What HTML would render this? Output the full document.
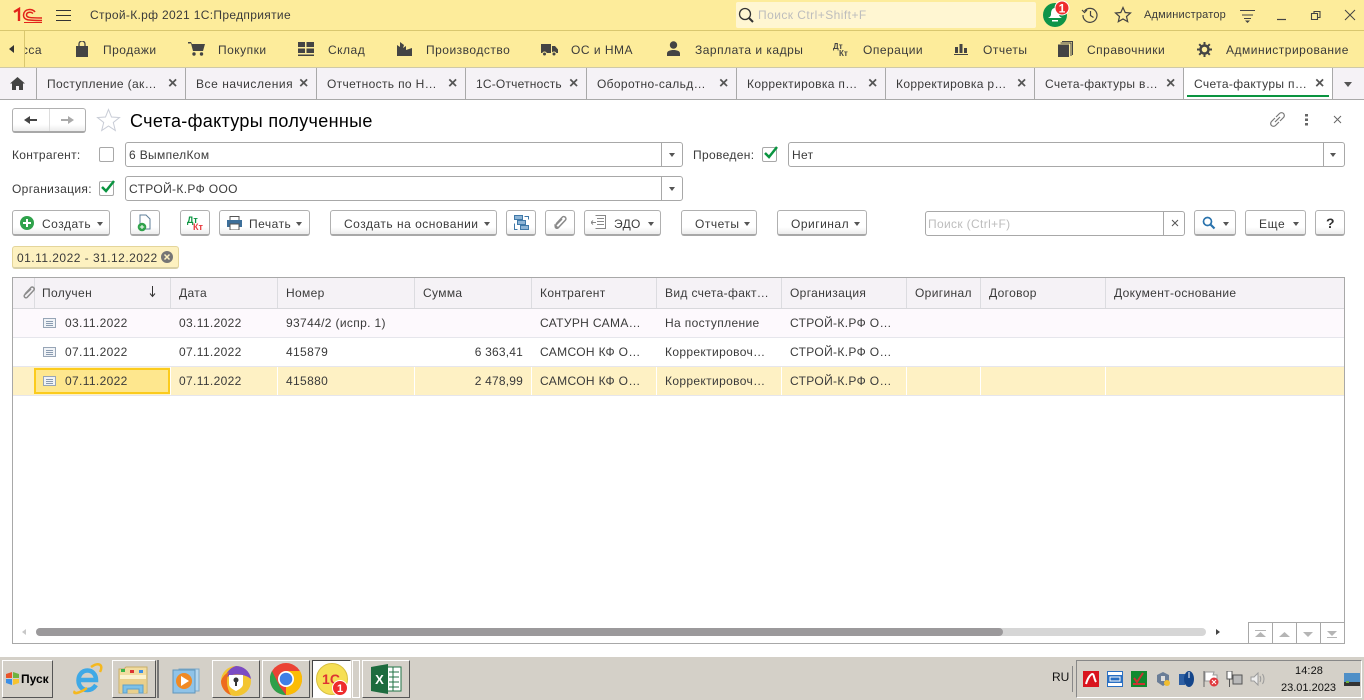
<!DOCTYPE html>
<html><head><meta charset="utf-8"><style>
html,body{margin:0;padding:0}
body{width:1364px;height:700px;overflow:hidden;background:#fff;position:relative;font-family:"Liberation Sans",sans-serif;font-size:12px;color:#3a3a3a}
.a,.t,.b,svg.i{position:absolute}
.t{white-space:nowrap;line-height:14px;letter-spacing:.35px}
.m{letter-spacing:.5px}
.a{box-sizing:border-box}
.b{box-sizing:border-box;height:26px;top:210px;border:1px solid #b0b0b0;border-bottom:2px solid #a8a8a8;border-radius:3px;background:linear-gradient(#fff 70%,#ececec)}
.in{position:absolute;box-sizing:border-box;background:#fff;border:1px solid #a8a8a8;border-radius:3px;height:25px}
.tri{position:absolute;width:0;height:0;border-left:3.5px solid transparent;border-right:3.5px solid transparent;border-top:4px solid #555}
.cb{position:absolute;box-sizing:border-box;width:15px;height:15px;border:1px solid #a8a8a8;border-radius:2px;background:#fff}
.x{position:absolute;font-size:16px;font-weight:bold;color:#555;line-height:14px}
.tb{position:absolute;box-sizing:border-box;top:660px;height:38px;border:1px solid;border-color:#fff #555 #555 #fff;background:#d4d0c8}
</style></head><body>

<!-- top bar -->
<div class="a" style="left:0;top:0;width:1364px;height:31px;background:#fdec9b;border-bottom:1px solid #d9c76f"></div>
<svg class="i" style="left:13px;top:7px" width="30" height="16" viewBox="0 0 30 16" fill="none" stroke="#e2231a"><path d="M1 5 6 2V14" stroke-width="2.400"/><path d="M22 5C20 1.500 11 1 10.500 8 10.500 13 14 13.500 29 13.500" stroke-width="1.500"/><path d="M20 6.500C18 4.500 13.500 5 13.500 8 13.500 10.500 16 11 29 11" stroke-width="1.500"/><path d="M11 15.500H29" stroke-width="1"/></svg>
<svg class="i" style="left:56px;top:10px" width="15" height="12" stroke="#333" stroke-width="1"><path d="M0 .5H15M0 5.500H15M0 10.500H15"/></svg>
<div class="t" style="left:90px;top:8px;letter-spacing:.33px">Строй-К.рф 2021 1С:Предприятие</div>
<div class="a" style="left:736px;top:2px;width:300px;height:26px;background:#fff6d2;border-radius:2px"></div>
<svg class="i" style="left:738px;top:7px" width="17" height="16" fill="none" stroke="#333"><circle cx="7" cy="7" r="5.500" stroke-width="1.300"/><path d="M11 11 15 15" stroke-width="2"/></svg>
<div class="t" style="left:758px;top:8px;color:#bdbdbd;letter-spacing:.45px">Поиск Ctrl+Shift+F</div>
<svg class="i" style="left:1042px;top:0" width="30" height="28"><circle cx="13" cy="15" r="12" fill="#0e9448"/><path d="M13 8c-3 0-4 3-4 6 0 2-1 3-3 4h14c-2-1-3-2-3-4 0-3-1-6-4-6z" fill="#fff"/><path d="M10 20h6v1.500h-6z" fill="#fff"/><circle cx="20" cy="8" r="7" fill="#ee2c2c" stroke="#fff"/><text x="20" y="12.500" text-anchor="middle" font-size="12" font-weight="bold" fill="#fff" font-family="Liberation Sans">1</text></svg>
<svg class="i" style="left:1081px;top:6px" width="18" height="18" fill="none" stroke="#444" stroke-width="1.200"><path d="M3.500 5A7 7 0 1 1 2 9"/><path d="M1 4 3.500 6.500 6 4" /><path d="M9.500 5v4.500l3 2"/></svg>
<svg class="i" style="left:1114px;top:6px" width="18" height="17" fill="none" stroke="#444" stroke-width="1.200"><path d="M9 1.500 11.200 6.500 16.500 7 12.500 10.500 13.700 15.700 9 13 4.300 15.700 5.500 10.500 1.500 7 6.800 6.500z"/></svg>
<div class="t" style="left:1144px;top:8px;font-size:11px;letter-spacing:.2px">Администратор</div>
<svg class="i" style="left:1240px;top:9px" width="15" height="14" fill="#444"><path d="M0 1h15v1H0zM2 5.500h11v1H2zM4 9h7v1H4zM5 11.500h5L7.500 14z"/></svg>
<svg class="i" style="left:1276px;top:9px" width="80" height="13" fill="none" stroke="#444"><path d="M1 10.500H10" stroke-width="1.200"/><path d="M35.500 4.500h6v6h-6zM38 4.500v-2h6v6h-2.500" stroke-width="1.100"/><path d="M69 1 79 11M79 1 69 11" stroke-width="1"/></svg>

<!-- menu -->
<div class="a" style="left:0;top:31px;width:1364px;height:37px;background:#fdec9b;border-bottom:1px solid #cfc9a8"></div>
<div class="a" style="left:24px;top:31px;width:1px;height:36px;background:#d9c76f"></div>
<div class="a" style="left:9px;top:45px;border-right:5px solid #333;border-top:4px solid transparent;border-bottom:4px solid transparent"></div>
<div class="t m" style="left:25px;top:43px;width:17px;overflow:hidden;direction:rtl">сса</div>
<div class="t m" style="left:103px;top:43px">Продажи</div>
<div class="t m" style="left:218px;top:43px">Покупки</div>
<div class="t m" style="left:328px;top:43px">Склад</div>
<div class="t m" style="left:426px;top:43px">Производство</div>
<div class="t m" style="left:571px;top:43px">ОС и НМА</div>
<div class="t m" style="left:695px;top:43px">Зарплата и кадры</div>
<div class="t m" style="left:863px;top:43px">Операции</div>
<div class="t m" style="left:983px;top:43px">Отчеты</div>
<div class="t m" style="left:1087px;top:43px">Справочники</div>
<div class="t m" style="left:1226px;top:43px">Администрирование</div>
<svg class="i" style="left:75px;top:41px" width="14" height="16" fill="#444"><path d="M1 5h12v11H1z"/><path d="M4 6V3a3 3 0 0 1 6 0v3" fill="none" stroke="#444" stroke-width="1.300"/></svg>
<svg class="i" style="left:188px;top:41px" width="17" height="15" fill="#444"><path d="M0 1h3l1 2h13l-2 7H5L3 2.500H0z"/><circle cx="6" cy="13" r="1.700"/><circle cx="13.500" cy="13" r="1.700"/></svg>
<svg class="i" style="left:298px;top:42px" width="16" height="14" fill="#444"><path d="M0 0h7v5H0zM8.500 0H16v5H8.500zM0 6.500h7V11H0zM8.500 6.500H16V11H8.500zM0 12.500h16V14H0z"/></svg>
<svg class="i" style="left:397px;top:42px" width="15" height="14" fill="#444"><path d="M0 14V3l3 2V0l4 3-1 3 3-2v4l6-2v8z"/></svg>
<svg class="i" style="left:541px;top:43px" width="17" height="13" fill="#444"><path d="M0 1h10v9H0zM11 3h3l3 3.500V10h-6z"/><circle cx="3.500" cy="11" r="2" stroke="#fdec9b"/><circle cx="13" cy="11" r="2" stroke="#fdec9b"/></svg>
<svg class="i" style="left:667px;top:41px" width="13" height="15" fill="#444"><circle cx="6.500" cy="4" r="3.700"/><path d="M0 15v-2.500C0 10 3 9 6.500 9s6.500 1 6.500 3.500V15z"/></svg>
<div class="t" style="left:833px;top:40px;font-size:8px;font-weight:bold;color:#444;letter-spacing:0">Дт</div>
<div class="t" style="left:839px;top:47px;font-size:8px;font-weight:bold;color:#444;letter-spacing:0">Кт</div>
<svg class="i" style="left:954px;top:43px" width="14" height="12" fill="#444"><path d="M1 4h3v6H1zM5.500 1h3v9h-3zM10 5h3v5h-3zM0 11h14v1H0z"/></svg>
<svg class="i" style="left:1058px;top:41px" width="15" height="16"><path d="M4 .5h10.500V14M2.500 2h10.500v13" fill="none" stroke="#444"/><path d="M0 3.500h11V16H0z" fill="#444"/></svg>
<svg class="i" style="left:1197px;top:42px" width="15" height="15" fill="none" stroke="#444"><circle cx="7.500" cy="7.500" r="4" stroke-width="2.500"/><path d="M7.500 0V3M7.500 12V15M0 7.500H3M12 7.500H15M2.200 2.200 4.300 4.300M10.700 10.700 12.800 12.800M2.200 12.800 4.300 10.700M10.700 4.300 12.800 2.200" stroke-width="2"/></svg>

<!-- tabs -->
<div class="a" style="left:0;top:68px;width:1364px;height:32px;background:#f5f2f6;border-bottom:1px solid #a9a9a9"></div>
<svg class="i" style="left:10px;top:77px" width="15" height="13" fill="#444"><path d="M7.500 0 15 6.500h-2V13H9V9H6v4H2V6.500H0z"/></svg>
<div class="a" style="left:1183px;top:68px;width:150px;height:32px;background:#fff;border-bottom:1px solid #a9a9a9"></div>
<div class="a" style="left:1187px;top:95px;width:142px;height:2px;background:#0a9440"></div>
<div class="a" style="left:36px;top:68px;width:1px;height:31px;background:#a9a9a9"></div>
<div class="a" style="left:185px;top:68px;width:1px;height:31px;background:#a9a9a9"></div>
<div class="a" style="left:316px;top:68px;width:1px;height:31px;background:#a9a9a9"></div>
<div class="a" style="left:465px;top:68px;width:1px;height:31px;background:#a9a9a9"></div>
<div class="a" style="left:586px;top:68px;width:1px;height:31px;background:#a9a9a9"></div>
<div class="a" style="left:736px;top:68px;width:1px;height:31px;background:#a9a9a9"></div>
<div class="a" style="left:885px;top:68px;width:1px;height:31px;background:#a9a9a9"></div>
<div class="a" style="left:1034px;top:68px;width:1px;height:31px;background:#a9a9a9"></div>
<div class="a" style="left:1183px;top:68px;width:1px;height:31px;background:#a9a9a9"></div>
<div class="a" style="left:1332px;top:68px;width:1px;height:31px;background:#a9a9a9"></div>
<div class="t" style="left:47px;top:77px">Поступление (ак…</div><div class="x" style="left:168px;top:77px">×</div>
<div class="t" style="left:196px;top:77px;letter-spacing:.55px">Все начисления</div><div class="x" style="left:299px;top:77px">×</div>
<div class="t" style="left:327px;top:77px">Отчетность по Н…</div><div class="x" style="left:448px;top:77px">×</div>
<div class="t" style="left:476px;top:77px;letter-spacing:.2px">1С-Отчетность</div><div class="x" style="left:569px;top:77px">×</div>
<div class="t" style="left:597px;top:77px">Оборотно-сальд…</div><div class="x" style="left:719px;top:77px">×</div>
<div class="t" style="left:747px;top:77px">Корректировка п…</div><div class="x" style="left:868px;top:77px">×</div>
<div class="t" style="left:896px;top:77px">Корректировка р…</div><div class="x" style="left:1017px;top:77px">×</div>
<div class="t" style="left:1045px;top:77px">Счета-фактуры в…</div><div class="x" style="left:1166px;top:77px">×</div>
<div class="t" style="left:1194px;top:77px">Счета-фактуры п…</div><div class="x" style="left:1315px;top:77px">×</div>
<div class="tri" style="left:1344px;top:82px;border-left-width:4px;border-right-width:4px;border-top-width:5px;border-top-color:#555"></div>

<!-- title -->
<div class="b" style="left:12px;top:108px;width:74px;height:25px"></div>
<div class="a" style="left:49px;top:109px;width:1px;height:22px;background:#ddd"></div>
<svg class="i" style="left:24px;top:115px" width="50" height="10"><path d="M0 5 6 1v3h7v2H6v3z" fill="#444"/><path d="M50 5 44 1v3h-7v2h7v3z" fill="#aaa"/></svg>
<svg class="i" style="left:96px;top:108px" width="25" height="24" fill="none" stroke="#c8ccd6"><path d="M12.500 1.500 15.500 9 23.500 9.500 17.300 14.500 19.300 22.500 12.500 18 5.700 22.500 7.700 14.500 1.500 9.500 9.500 9z"/></svg>
<div class="t" style="left:130px;top:111px;font-size:18px;line-height:21px;color:#000;letter-spacing:.33px">Счета-фактуры полученные</div>
<svg class="i" style="left:1269px;top:111px" width="17" height="17" fill="none" stroke="#777" stroke-width="1.200"><path d="M7 6 10.500 2.500a2.500 2.500 0 0 1 4 4L11 10M10 11 6.500 14.500a2.500 2.500 0 0 1-4-4L6 7"/><path d="M6 11 11 6"/></svg>
<svg class="i" style="left:1305px;top:114px" width="4" height="12" fill="#666"><path d="M0 0h3v2.500H0zM0 4.500h3V7H0zM0 9h3v2.500H0z"/></svg>
<svg class="i" style="left:1333px;top:115px" width="9" height="9" stroke="#666"><path d="M1 1 8 8M8 1 1 8"/></svg>

<!-- filters -->
<div class="t" style="left:12px;top:148px;letter-spacing:.28px">Контрагент:</div>
<div class="cb" style="left:99px;top:147px"></div>
<div class="in" style="left:125px;top:142px;width:558px"></div>
<div class="a" style="left:661px;top:142px;width:1px;height:25px;background:#a8a8a8"></div>
<div class="tri" style="left:669px;top:153px"></div>
<div class="t" style="left:129px;top:148px">6 ВымпелКом</div>
<div class="t" style="left:693px;top:148px">Проведен:</div>
<div class="cb" style="left:762px;top:147px"></div>
<svg class="i" style="left:763px;top:145px" width="16" height="15" fill="none" stroke="#0a9440" stroke-width="2.500"><path d="M2 8 6 12 14 2"/></svg>
<div class="in" style="left:788px;top:142px;width:557px"></div>
<div class="a" style="left:1323px;top:142px;width:1px;height:25px;background:#a8a8a8"></div>
<div class="tri" style="left:1330px;top:153px"></div>
<div class="t" style="left:792px;top:148px">Нет</div>
<div class="t" style="left:12px;top:182px">Организация:</div>
<div class="cb" style="left:99px;top:181px"></div>
<svg class="i" style="left:100px;top:179px" width="16" height="15" fill="none" stroke="#0a9440" stroke-width="2.500"><path d="M2 8 6 12 14 2"/></svg>
<div class="in" style="left:125px;top:176px;width:558px"></div>
<div class="a" style="left:661px;top:176px;width:1px;height:25px;background:#a8a8a8"></div>
<div class="tri" style="left:669px;top:187px"></div>
<div class="t" style="left:129px;top:182px">СТРОЙ-К.РФ ООО</div>

<!-- toolbar -->
<div class="b" style="left:12px;width:98px"></div>
<svg class="i" style="left:20px;top:216px" width="14" height="14"><circle cx="7" cy="7" r="7" fill="#2fa24b"/><path d="M3 6h3V3h2v3h3v2H8v3H6V8H3z" fill="#fff"/></svg>
<div class="t" style="left:42px;top:217px;letter-spacing:.5px">Создать</div><div class="tri" style="left:97px;top:222px"></div>
<div class="b" style="left:130px;width:30px"></div>
<svg class="i" style="left:137px;top:214px" width="15" height="18"><path d="M3 1h6l4 4v10H3z" fill="#fff" stroke="#5f7f99"/><circle cx="5" cy="13" r="4.300" fill="#2fa24b"/><path d="M2.800 12.500h1.700V11h1v1.500h1.700v1H5.500V15h-1v-1.500H2.800z" fill="#fff"/></svg>
<div class="b" style="left:180px;width:30px"></div>
<div class="t" style="left:187px;top:213px;font-size:9px;font-weight:bold;color:#0a9440;letter-spacing:0">Дт</div>
<div class="t" style="left:193px;top:220px;font-size:9px;font-weight:bold;color:#e8383d;letter-spacing:0">Кт</div>
<div class="b" style="left:219px;width:91px"></div>
<svg class="i" style="left:227px;top:216px" width="15" height="14"><path d="M3 .5h9v4H3z" fill="#fff" stroke="#555"/><path d="M0 4h15v7H0z" fill="#3d6f9a"/><path d="M3 8h9v6H3z" fill="#fff" stroke="#555"/></svg>
<div class="t" style="left:249px;top:217px;letter-spacing:.5px">Печать</div><div class="tri" style="left:296px;top:222px"></div>
<div class="b" style="left:330px;width:167px"></div>
<div class="t" style="left:344px;top:217px;letter-spacing:.5px">Создать на основании</div><div class="tri" style="left:484px;top:222px"></div>
<div class="b" style="left:506px;width:30px"></div>
<svg class="i" style="left:514px;top:215px" width="15" height="15" fill="#8db4d6" stroke="#3f78a8"><path d="M.5.500h8v4h-8zM3.500 5.500h8v4h-8zM6.500 10.500h8v4h-8z" /><path d="M10.500 1.500h4v3M.5 8.500v6h3" fill="none"/></svg>
<div class="b" style="left:545px;width:30px"></div>
<svg class="i" style="left:553px;top:215px" width="14" height="15" fill="none" stroke="#8a8a8a" stroke-width="1.500"><path d="M3 9 9 2.500a2 2 0 0 1 3.500 2.500L5.500 12.500a1.500 1.500 0 0 1-3-2L9 4M1.500 9.500l3 3"/></svg>
<div class="b" style="left:584px;width:77px"></div>
<svg class="i" style="left:591px;top:215px" width="16" height="15" fill="none" stroke="#888"><path d="M4.500.5h10v13h-10M6 3.500h7M6 6.500h7M6 9.500h7M0 7.500h5M2 5.500 0 7.500l2 2"/></svg>
<div class="t" style="left:614px;top:217px">ЭДО</div><div class="tri" style="left:648px;top:222px"></div>
<div class="b" style="left:681px;width:76px"></div>
<div class="t" style="left:695px;top:217px;letter-spacing:.5px">Отчеты</div><div class="tri" style="left:744px;top:222px"></div>
<div class="b" style="left:777px;width:90px"></div>
<div class="t" style="left:791px;top:217px;letter-spacing:.5px">Оригинал</div><div class="tri" style="left:854px;top:222px"></div>
<div class="in" style="left:925px;top:211px;width:260px"></div>
<div class="a" style="left:1163px;top:211px;width:1px;height:25px;background:#a8a8a8"></div>
<div class="t" style="left:928px;top:217px;color:#bdbdbd">Поиск (Ctrl+F)</div>
<svg class="i" style="left:1171px;top:219px" width="8" height="8" stroke="#555"><path d="M1 1 7 7M7 1 1 7"/></svg>
<div class="b" style="left:1194px;width:42px"></div>
<svg class="i" style="left:1202px;top:216px" width="14" height="14" fill="none" stroke="#2a73ad" stroke-width="1.700"><circle cx="5.500" cy="5.500" r="4"/><path d="M8.500 8.500 12.500 12.500" stroke-width="2.200"/></svg>
<div class="tri" style="left:1223px;top:222px"></div>
<div class="b" style="left:1245px;width:61px"></div>
<div class="t" style="left:1259px;top:217px;letter-spacing:.6px">Еще</div><div class="tri" style="left:1293px;top:222px"></div>
<div class="b" style="left:1315px;width:30px"></div>
<div class="t" style="left:1326px;top:216px;font-size:14px;font-weight:bold;color:#333;letter-spacing:0">?</div>

<!-- date chip -->
<div class="a" style="left:12px;top:246px;width:167px;height:23px;background:#fdf1c0;border:1px solid #e4d59a;border-bottom:2px solid #d8d0a8;border-radius:3px"></div>
<div class="t" style="left:17px;top:251px;letter-spacing:.47px">01.11.2022 - 31.12.2022</div>
<svg class="i" style="left:161px;top:251px" width="12" height="12"><circle cx="6" cy="6" r="6" fill="#757575"/><path d="M3.500 3.500 8.500 8.500M8.500 3.500 3.500 8.500" stroke="#fdf1c0" stroke-width="1.500"/></svg>

<!-- table -->
<div class="a" style="left:12px;top:277px;width:1333px;height:367px;border:1px solid #a8a8a8"></div>
<div class="a" style="left:13px;top:278px;width:1331px;height:30px;background:#f5f2f6"></div>
<div class="a" style="left:13px;top:308px;width:1331px;height:1px;background:#d8d8dc"></div>
<div class="a" style="left:13px;top:309px;width:1331px;height:28px;background:#fdf9fd"></div>
<div class="a" style="left:13px;top:337px;width:1331px;height:1px;background:#e6e6ec"></div>
<div class="a" style="left:13px;top:366px;width:1331px;height:1px;background:#e6e6ec"></div>
<div class="a" style="left:13px;top:367px;width:1331px;height:28px;background:#fef1c4"></div>
<div class="a" style="left:13px;top:395px;width:1331px;height:1px;background:#e6e6ec"></div>
<div class="a" style="left:34px;top:278px;width:1px;height:30px;background:#dcdce0"></div>
<div class="a" style="left:170px;top:278px;width:1px;height:30px;background:#dcdce0"></div>
<div class="a" style="left:277px;top:278px;width:1px;height:30px;background:#dcdce0"></div>
<div class="a" style="left:414px;top:278px;width:1px;height:30px;background:#dcdce0"></div>
<div class="a" style="left:531px;top:278px;width:1px;height:30px;background:#dcdce0"></div>
<div class="a" style="left:656px;top:278px;width:1px;height:30px;background:#dcdce0"></div>
<div class="a" style="left:781px;top:278px;width:1px;height:30px;background:#dcdce0"></div>
<div class="a" style="left:906px;top:278px;width:1px;height:30px;background:#dcdce0"></div>
<div class="a" style="left:980px;top:278px;width:1px;height:30px;background:#dcdce0"></div>
<div class="a" style="left:1105px;top:278px;width:1px;height:30px;background:#dcdce0"></div>
<div class="a" style="left:170px;top:367px;width:1px;height:28px;background:#fff"></div>
<div class="a" style="left:277px;top:367px;width:1px;height:28px;background:#fff"></div>
<div class="a" style="left:414px;top:367px;width:1px;height:28px;background:#fff"></div>
<div class="a" style="left:531px;top:367px;width:1px;height:28px;background:#fff"></div>
<div class="a" style="left:656px;top:367px;width:1px;height:28px;background:#fff"></div>
<div class="a" style="left:781px;top:367px;width:1px;height:28px;background:#fff"></div>
<div class="a" style="left:906px;top:367px;width:1px;height:28px;background:#fff"></div>
<div class="a" style="left:980px;top:367px;width:1px;height:28px;background:#fff"></div>
<div class="a" style="left:1105px;top:367px;width:1px;height:28px;background:#fff"></div>
<div class="a" style="left:34px;top:368px;width:136px;height:26px;background:#fee78e;border:2px solid #fbcb1d"></div>
<svg class="i" style="left:22px;top:285px" width="14" height="15" fill="none" stroke="#8c8c8c" stroke-width="1.500"><path d="M3 9 9 2.500a2 2 0 0 1 3 2.500L5.500 12a1.500 1.500 0 0 1-3-2L9 4"/></svg>
<div class="t" style="left:42px;top:286px">Получен</div>
<svg class="i" style="left:149px;top:286px" width="7" height="12" fill="none" stroke="#333"><path d="M3.500 0V10M1 7.500 3.500 10.500 6 7.500"/></svg>
<div class="t" style="left:179px;top:286px">Дата</div>
<div class="t" style="left:286px;top:286px">Номер</div>
<div class="t" style="left:423px;top:286px">Сумма</div>
<div class="t" style="left:540px;top:286px">Контрагент</div>
<div class="t" style="left:665px;top:286px">Вид счета-факт…</div>
<div class="t" style="left:790px;top:286px">Организация</div>
<div class="t" style="left:915px;top:286px">Оригинал</div>
<div class="t" style="left:989px;top:286px">Договор</div>
<div class="t" style="left:1114px;top:286px">Документ-основание</div>

<svg class="i" style="left:43px;top:318px" width="14" height="11" fill="none" stroke="#97a5b6"><path d="M.5.500h12v9H.5z" fill="#f0f3f7"/><path d="M3 3.500H10M3 5.500H10M3 7.500H10" stroke="#8a9bb0"/></svg>
<svg class="i" style="left:43px;top:347px" width="14" height="11" fill="none" stroke="#97a5b6"><path d="M.5.500h12v9H.5z" fill="#f0f3f7"/><path d="M3 3.500H10M3 5.500H10M3 7.500H10" stroke="#8a9bb0"/></svg>
<svg class="i" style="left:43px;top:376px" width="14" height="11" fill="none" stroke="#97a5b6"><path d="M.5.500h12v9H.5z" fill="#f0f3f7"/><path d="M3 3.500H10M3 5.500H10M3 7.500H10" stroke="#8a9bb0"/></svg>

<div class="t" style="left:65px;top:316px">03.11.2022</div>
<div class="t" style="left:179px;top:316px">03.11.2022</div>
<div class="t" style="left:286px;top:316px">93744/2 (испр. 1)</div>
<div class="t" style="left:540px;top:316px">САТУРН САМА…</div>
<div class="t" style="left:665px;top:316px">На поступление</div>
<div class="t" style="left:790px;top:316px">СТРОЙ-К.РФ О…</div>
<div class="t" style="left:65px;top:345px">07.11.2022</div>
<div class="t" style="left:179px;top:345px">07.11.2022</div>
<div class="t" style="left:286px;top:345px">415879</div>
<div class="t" style="right:841px;top:345px;letter-spacing:.2px">6 363,41</div>
<div class="t" style="left:540px;top:345px">САМСОН КФ О…</div>
<div class="t" style="left:665px;top:345px">Корректировоч…</div>
<div class="t" style="left:790px;top:345px">СТРОЙ-К.РФ О…</div>
<div class="t" style="left:65px;top:374px">07.11.2022</div>
<div class="t" style="left:179px;top:374px">07.11.2022</div>
<div class="t" style="left:286px;top:374px">415880</div>
<div class="t" style="right:841px;top:374px;letter-spacing:.2px">2 478,99</div>
<div class="t" style="left:540px;top:374px">САМСОН КФ О…</div>
<div class="t" style="left:665px;top:374px">Корректировоч…</div>
<div class="t" style="left:790px;top:374px">СТРОЙ-К.РФ О…</div>

<!-- scrollbar -->
<div class="a" style="left:22px;top:629px;border-right:4px solid #c8c8c8;border-top:3px solid transparent;border-bottom:3px solid transparent"></div>
<div class="a" style="left:36px;top:628px;width:1170px;height:8px;background:#d6d6d6;border-radius:4px"></div>
<div class="a" style="left:36px;top:628px;width:967px;height:8px;background:#9b999b;border-radius:4px"></div>
<div class="a" style="left:1216px;top:629px;border-left:4px solid #444;border-top:3px solid transparent;border-bottom:3px solid transparent"></div>
<div class="a" style="left:1248px;top:622px;width:97px;height:22px;border:1px solid #a8a8a8;background:#fff"></div>
<div class="a" style="left:1272px;top:622px;width:1px;height:22px;background:#a8a8a8"></div>
<div class="a" style="left:1296px;top:622px;width:1px;height:22px;background:#a8a8a8"></div>
<div class="a" style="left:1320px;top:622px;width:1px;height:22px;background:#a8a8a8"></div>
<svg class="i" style="left:1255px;top:630px" width="86" height="8" fill="#b5b5b5"><path d="M0 0h11v1H0zM5.500 2 11 7H0zM24 7 29.500 2 35 7zM48 2H58L53 7zM72 1H82L77 6zM72 7h10v1H72z"/></svg>

<!-- taskbar -->
<div class="a" style="left:0;top:656px;width:1364px;height:44px;background:#d4d0c8;border-top:1px solid #fff;box-shadow:inset 0 1px 0 #d4d0c8"></div>
<div class="tb" style="left:2px;width:51px"></div>
<svg class="i" style="left:5px;top:671px" width="15" height="15"><path d="M1 3 7 1v6H1z" fill="#e8542a"/><path d="M8 1l6 2v4H8z" fill="#6db33f"/><path d="M1 8h6v6l-6-2z" fill="#3a8ee6"/><path d="M8 8h6v4l-6 2z" fill="#f7c32e"/></svg>
<div class="t" style="left:21px;top:672px;font-weight:bold;color:#000;letter-spacing:0">Пуск</div>
<svg class="i" style="left:71px;top:662px" width="32" height="33" fill="none"><path d="M9 18H25C25 12 21 8.500 16.500 8.500 11 8.500 7.500 13 7.500 18.500 7.500 24 11 28 16.500 28 20 28 23 26 25 23" stroke="#3fa9e6" stroke-width="4.500"/><path d="M4 29C1 33 9 31 16 26M20 5C27 0 33 2 29 10" stroke="#f5b81e" stroke-width="2.500"/></svg>
<div class="tb" style="left:112px;width:44px"></div>
<div class="a" style="left:157px;top:660px;width:2px;height:38px;background:#777"></div>
<svg class="i" style="left:118px;top:665px" width="32" height="30"><path d="M1 4h5l2-2h21v26H1z" fill="#f1dca0" stroke="#c9ae66"/><path d="M3 4h4v3H3z" fill="#3bb54a"/><path d="M12 5h4v3h-4z" fill="#d33"/><path d="M21 5h4v3h-4z" fill="#3a8ee6"/><path d="M2 10h26v4H2z" fill="#fbf2cf"/><path d="M2 14h26v14H2z" fill="#e9cf8c"/><path d="M5 20h20v8h-4v-4H9v4H5z" fill="#7dc1e8" stroke="#5c9fcb"/></svg>
<svg class="i" style="left:172px;top:667px" width="28" height="27"><path d="M7 2h20v22H7z" fill="#b6d7ee" stroke="#7ea9c8"/><path d="M1 3h22v23H1z" fill="#8fc3e8" stroke="#5f96bd"/><circle cx="12" cy="14" r="8" fill="#f08a24"/><path d="M9 9l8 5-8 5z" fill="#fff"/></svg>
<div class="tb" style="left:212px;width:48px"></div>
<svg class="i" style="left:220px;top:665px" width="32" height="32"><circle cx="16" cy="16" r="15" fill="#f3c531"/><path d="M16 1a15 15 0 0 1 15 13C24 8 10 8 5 14a15 15 0 0 1 11-13z" fill="#7b4bc4"/><path d="M1 16a15 15 0 0 0 10 14C6 22 6 14 9 7A15 15 0 0 0 1 16z" fill="#ee6b1f"/><path d="M9 10h14v9c0 3-3 5-7 7-4-2-7-4-7-7z" fill="#fff"/><circle cx="16" cy="15" r="2.500" fill="#333"/><path d="M15 16h2v5h-2z" fill="#333"/></svg>
<div class="tb" style="left:262px;width:48px"></div>
<svg class="i" style="left:270px;top:663px" width="32" height="32"><circle cx="16" cy="16" r="16" fill="#eb4335"/><path d="M16 32A16 16 0 0 0 30 8H16z" fill="#fbbc05"/><path d="M16 32A16 16 0 0 1 2 8l8 16z" fill="#2fa04a"/><circle cx="16" cy="16" r="8" fill="#fff"/><circle cx="16" cy="16" r="6.300" fill="#3f7fe6"/></svg>
<div class="a" style="left:312px;top:660px;width:39px;height:38px;background:#fff;border:1px solid;border-color:#444 #fff #fff #444"></div>
<div class="a" style="left:352px;top:660px;width:8px;height:38px;border:1px solid #fff"></div>
<svg class="i" style="left:316px;top:663px" width="33" height="33"><circle cx="16" cy="16" r="15.500" fill="#f6df55" stroke="#d8c040"/><text x="15" y="21" text-anchor="middle" font-size="14" font-weight="bold" fill="#d33" font-family="Liberation Sans">1С</text><circle cx="24" cy="25" r="7.500" fill="#ee2c2c" stroke="#fff"/><text x="24" y="29" text-anchor="middle" font-size="11" font-weight="bold" fill="#fff" font-family="Liberation Sans">1</text></svg>
<div class="tb" style="left:362px;width:48px"></div>
<svg class="i" style="left:371px;top:664px" width="31" height="30"><path d="M14 3h16v24H14z" fill="#fff" stroke="#217346"/><path d="M18 8h10M18 13h10M18 18h10M18 23h10M22 3v24" stroke="#217346"/><path d="M0 3 17 0V30L0 27z" fill="#1d6b3e"/><text x="8.500" y="20" text-anchor="middle" font-size="13" font-weight="bold" fill="#fff" font-family="Liberation Sans">X</text></svg>

<!-- tray -->
<div class="t" style="left:1052px;top:670px;color:#111;letter-spacing:0">RU</div>
<div class="a" style="left:1072px;top:666px;width:1px;height:26px;background:#888"></div>
<div class="a" style="left:1076px;top:660px;width:286px;height:38px;border:1px solid;border-color:#888 #fff #fff #888"></div>
<svg class="i" style="left:1083px;top:671px" width="16" height="16"><path d="M0 0h16v16H0z" fill="#d9141e"/><path d="M3 13C5 6 8 3 9.500 3S11 8 13 11" fill="none" stroke="#fff" stroke-width="2"/></svg>
<svg class="i" style="left:1107px;top:671px" width="16" height="16"><path d="M.5.500h15v15H.5z" fill="#fff" stroke="#2a6fc2"/><path d="M1 4h14v8H1z" fill="#2a6fc2"/><path d="M3 6h10v4H3z" fill="none" stroke="#fff"/></svg>
<svg class="i" style="left:1131px;top:671px" width="16" height="16"><path d="M0 0h16v16H0z" fill="#0f8a2f"/><path d="M2 13h12M3 7l3 4 6-9" fill="none" stroke="#c33" stroke-width="2"/></svg>
<svg class="i" style="left:1156px;top:671px" width="15" height="16"><path d="M7 1 13 4v7l-6 4-6-4V4z" fill="#6a7d97"/><path d="M5 5h4v5H5z" fill="#ddd"/><circle cx="11" cy="12" r="3" fill="#f1bd2f"/></svg>
<svg class="i" style="left:1179px;top:671px" width="16" height="16"><path d="M0 3h6v11H0z" fill="#2d5fa3"/><ellipse cx="10" cy="8" rx="5" ry="8" fill="#14458a"/><path d="M10 1v6" stroke="#fff"/></svg>
<svg class="i" style="left:1203px;top:671px" width="16" height="16"><path d="M1 0v16" stroke="#666"/><path d="M2 1h9l-1 3 4 0v6H2z" fill="#fff" stroke="#999"/><circle cx="11" cy="11" r="4.500" fill="#e0393e"/><path d="M9 9l4 4M13 9l-4 4" stroke="#fff"/></svg>
<svg class="i" style="left:1226px;top:671px" width="17" height="16"><path d="M1 0h5v8H1z" fill="#fff" stroke="#555"/><path d="M3.500 8v8" stroke="#555"/><path d="M7 4h9v9H7z" fill="#b9b9b9" stroke="#555"/></svg>
<svg class="i" style="left:1250px;top:672px" width="16" height="14" fill="none" stroke="#9a9a9a"><path d="M1 5h3l4-4v12L4 9H1z" fill="#eee"/><path d="M10 4c1 2 1 4 0 6M12.500 2c2 3 2 7 0 10"/></svg>
<div class="t" style="left:1295px;top:664px;color:#111;font-size:11px;letter-spacing:.1px">14:28</div>
<div class="t" style="left:1281px;top:681px;color:#111;font-size:11px;letter-spacing:0">23.01.2023</div>
<svg class="i" style="left:1344px;top:673px" width="16" height="13"><path d="M0 0h16v11H0z" fill="#4f8fc7"/><path d="M0 9h16v4H0z" fill="#333"/><path d="M2 8h3v2H2z" fill="#6db33f"/></svg>
</body></html>
